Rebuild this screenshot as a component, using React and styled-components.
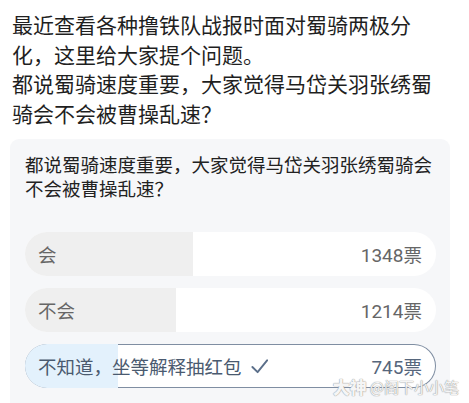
import React from 'react'
import styled, { createGlobalStyle } from 'styled-components'

const GlobalStyle = createGlobalStyle`
  html, body {
    margin: 0;
    padding: 0;
    background: #ffffff;
    font-family: "Noto Sans CJK SC", "Noto Sans", sans-serif;
  }
`

const options = [
  { label: '会', votes: 1348 },
  { label: '不会', votes: 1214 },
  { label: '不知道，坐等解释抽红包', votes: 745, chosen: true }
]

const total = options.reduce((sum, o) => sum + o.votes, 0)

const App = () => (
  <Page>
    <GlobalStyle />
    <PostText>
      最近查看各种撸铁队战报时面对蜀骑两极分化，这里给大家提个问题。
      <br />
      都说蜀骑速度重要，大家觉得马岱关羽张绣蜀骑会不会被曹操乱速？
    </PostText>
    <PollCard>
      <Question>都说蜀骑速度重要，大家觉得马岱关羽张绣蜀骑会不会被曹操乱速？</Question>
      <OptionList>
        {options.map(opt => (
          <Option key={opt.label} $chosen={opt.chosen}>
            <Fill $chosen={opt.chosen} style={{ width: `${(opt.votes / total) * 100}%` }} />
            <Label $chosen={opt.chosen}>
              {opt.label}
              {opt.chosen && (
                <Check viewBox="0 0 20 20">
                  <path d="M2.5 10.5 L8 16 L18 3.5" />
                </Check>
              )}
            </Label>
            <Count $chosen={opt.chosen}>
              {opt.votes}
              <span>票</span>
            </Count>
          </Option>
        ))}
      </OptionList>
      <Watermark>
        <b>大神</b>@阁下小小笔
      </Watermark>
    </PollCard>
  </Page>
)

export default App

const Page = styled.div`
  width: 469px;
  height: 403px;
  overflow: hidden;
  padding-top: 10px;
  box-sizing: border-box;
`
const PostText = styled.div`
  padding: 0 27px 0 12px;
  font-size: 21px;
  line-height: 29.5px;
  color: #1f1f1f;
`
const PollCard = styled.div`
  position: relative;
  margin: 11px 19px 0 10px;
  padding: 14px 14px 30px 15px;
  background: #f6f7f9;
  border-radius: 9px;
`
const Question = styled.div`
  font-size: 18.5px;
  line-height: 23.5px;
  color: #222;
`
const OptionList = styled.div`
  margin-top: 32px;
  display: flex;
  flex-direction: column;
  gap: 12px;
`
const Option = styled.div`
  position: relative;
  height: 44px;
  border-radius: 22px;
  overflow: hidden;
  background: #ffffff;
  display: flex;
  align-items: center;
  justify-content: space-between;
  padding: 0 14px 0 13px;
  box-sizing: border-box;
  box-shadow: ${p => (p.$chosen ? 'inset 0 0 0 1px #7f8ea2' : 'none')};
`
const Fill = styled.div`
  position: absolute;
  left: 0;
  top: 0;
  bottom: 0;
  background: ${p => (p.$chosen ? '#e3f1fc' : '#efefef')};
`
const Label = styled.span`
  position: relative;
  display: flex;
  align-items: center;
  gap: 8px;
  font-size: 18.5px;
  color: ${p => (p.$chosen ? '#4a5a6f' : '#666')};
`
const Check = styled.svg`
  width: 19px;
  height: 19px;
  fill: none;
  stroke: #5b6f8a;
  stroke-width: 2;
  stroke-linecap: round;
  stroke-linejoin: round;
`
const Count = styled.span`
  position: relative;
  font-family: Roboto, "Noto Sans CJK SC", sans-serif;
  font-size: 19px;
  color: ${p => (p.$chosen ? '#56667c' : '#666')};
  span {
    font-family: "Noto Sans CJK SC", sans-serif;
    font-size: 18.5px;
  }
`
const Watermark = styled.div`
  position: absolute;
  right: -9px;
  top: 235px;
  display: flex;
  align-items: center;
  gap: 3px;
  font-size: 15px;
  color: rgba(255, 255, 255, 0.92);
  text-shadow: 0 0 1px #999, 0 0 1px #999;
  white-space: nowrap;
  b {
    font-size: 17px;
    font-weight: 900;
  }
`
